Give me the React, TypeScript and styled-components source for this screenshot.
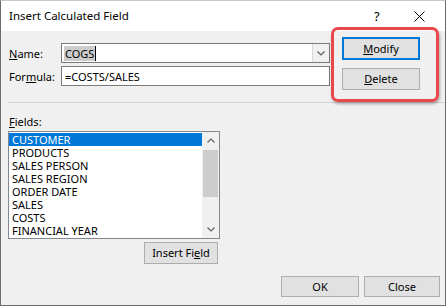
import React from "react";
import styled, {createGlobalStyle} from "styled-components";

const GlobalStyle = createGlobalStyle`
	html, body {
		margin: 0;
		padding: 0;
		background: #ffffff;
	}
	body {
		font-family: "Noto Sans", "Liberation Sans", sans-serif;
		font-size: 11px;
		color: #000;
	}
`;

const fields = [
	"CUSTOMER",
	"PRODUCTS",
	"SALES PERSON",
	"SALES REGION",
	"ORDER DATE",
	"SALES",
	"COSTS",
	"FINANCIAL YEAR",
];

const Chevron = ({up}: {up?: boolean}) => (
	<svg width="8" height="5" viewBox="0 0 8 5">
		<polyline
			points={up ? "0.5,4.5 4,1 7.5,4.5" : "0.5,0.5 4,4 7.5,0.5"}
			fill="none"
			stroke="#606060"
			strokeWidth="1.2"
		/>
	</svg>
);

const App: React.FC = () => {
	return (
		<>
			<GlobalStyle />
			<Window>
				<TitleBar>
					<TitleText>Insert Calculated Field</TitleText>
					<HelpGlyph>?</HelpGlyph>
					<CloseGlyph>
						<svg width="11" height="11" viewBox="0 0 11 11">
							<path d="M0.5 0.5 L10.5 10.5 M10.5 0.5 L0.5 10.5" stroke="#000" strokeWidth="1" />
						</svg>
					</CloseGlyph>
				</TitleBar>
				<Body>
					<TopRow>
						<FormGrid>
							<Label>
								<u>N</u>ame:
							</Label>
							<Combo>
								<ComboText>
									<Selected>COGS</Selected>
									<Caret />
								</ComboText>
								<DropButton>
									<Chevron />
								</DropButton>
							</Combo>
							<Label>
								For<u>m</u>ula:
							</Label>
							<Input>=COSTS/SALES</Input>
						</FormGrid>
						<SideButtons>
							<DialogButton $focused $width={78} $height={23}>
								<u>M</u>odify
							</DialogButton>
							<DialogButton $width={78} $height={22}>
								<u>D</u>elete
							</DialogButton>
						</SideButtons>
					</TopRow>
					<Separator />
					<FieldsLabel>
						<u>F</u>ields:
					</FieldsLabel>
					<ListBox>
						<ListItems>
							{fields.map((f, i) => (
								<ListItem key={f} $selected={i === 0}>
									{f}
								</ListItem>
							))}
						</ListItems>
						<ScrollBar>
							<ScrollArrow>
								<Chevron up />
							</ScrollArrow>
							<ScrollTrack>
								<Thumb />
							</ScrollTrack>
							<ScrollArrow>
								<Chevron />
							</ScrollArrow>
						</ScrollBar>
					</ListBox>
					<InsertRow>
						<DialogButton $width={74} $height={22}>
							Insert Fi<u>e</u>ld
						</DialogButton>
					</InsertRow>
					<BottomRow>
						<DialogButton $width={78} $height={21}>OK</DialogButton>
						<DialogButton $width={76} $height={21}>Close</DialogButton>
					</BottomRow>
				</Body>
				<Highlight />
			</Window>
		</>
	);
};

export default App;

const Window = styled.div`
	position: relative;
	width: 446px;
	height: 306px;
	box-sizing: border-box;
	border: 1px solid #6b6b6b;
	border-top-color: #c8c8c8;
	display: flex;
	flex-direction: column;
	background: #f0f0f0;
	overflow: hidden;
`;

const TitleBar = styled.div`
	height: 30px;
	flex: none;
	background: #ffffff;
	display: flex;
	align-items: center;
	padding-left: 8px;
	font-size: 11.5px;
`;

const TitleText = styled.div`
	flex: 1;
	padding-bottom: 1px;
`;

const HelpGlyph = styled.div`
	font-size: 13px;
	width: 10px;
	margin-right: 30px;
	padding-bottom: 1px;
`;

const CloseGlyph = styled.div`
	display: flex;
	margin-right: 20px;
	padding-top: 1px;
`;

const Body = styled.div`
	flex: 1;
	display: flex;
	flex-direction: column;
	padding-left: 7px;
`;

const TopRow = styled.div`
	display: flex;
	height: 71px;
	flex: none;
`;

const FormGrid = styled.div`
	margin-top: 12px;
	display: grid;
	grid-template-columns: 53px 269px;
	grid-auto-rows: 20px;
	row-gap: 3px;
	align-items: center;
	align-self: flex-start;
`;

const Label = styled.div`
	padding-left: 1px;
`;

const Combo = styled.div`
	height: 20px;
	box-sizing: border-box;
	border: 1px solid #7a7a7a;
	background: #fff;
	display: flex;
`;

const ComboText = styled.div`
	flex: 1;
	display: flex;
	align-items: center;
	padding-left: 2px;
`;

const Selected = styled.span`
	background: #cccccc;
	line-height: 15px;
	padding: 0 1px;
`;

const Caret = styled.span`
	width: 1px;
	height: 15px;
	background: #000;
`;

const DropButton = styled.div`
	width: 16px;
	background: #f0f0f0;
	border-left: 1px solid #d9d9d9;
	display: flex;
	align-items: center;
	justify-content: center;
`;

const Input = styled.div`
	height: 20px;
	box-sizing: border-box;
	border: 1px solid #7a7a7a;
	background: #fff;
	display: flex;
	align-items: center;
	padding-left: 3px;
`;

const SideButtons = styled.div`
	margin-left: 12px;
	margin-top: 6px;
	display: flex;
	flex-direction: column;
	gap: 8px;
`;

const DialogButton = styled.div<{$focused?: boolean; $width: number; $height: number}>`
	width: ${p => p.$width}px;
	height: ${p => p.$height}px;
	box-sizing: border-box;
	border: ${p => (p.$focused ? "2px solid #0078d7" : "1px solid #adadad")};
	background: #e1e1e1;
	display: flex;
	align-items: center;
	justify-content: center;
	padding-bottom: 1px;
`;

const Separator = styled.div`
	height: 1px;
	background: #d5d5d5;
	flex: none;
`;

const FieldsLabel = styled.div`
	margin-top: 11px;
	height: 16px;
	line-height: 16px;
	padding-left: 1px;
`;

const ListBox = styled.div`
	margin-top: 1px;
	width: 212px;
	height: 108px;
	box-sizing: border-box;
	border: 1px solid #828790;
	background: #fff;
	display: flex;
	overflow: hidden;
`;

const ListItems = styled.div`
	flex: 1;
	padding-top: 1px;
	overflow: hidden;
`;

const ListItem = styled.div<{$selected?: boolean}>`
	height: 13px;
	line-height: 13px;
	padding-left: 3px;
	white-space: nowrap;
	background: ${p => (p.$selected ? "#0078d7" : "transparent")};
	color: ${p => (p.$selected ? "#fff" : "#000")};
`;

const ScrollBar = styled.div`
	width: 17px;
	background: #f0f0f0;
	display: flex;
	flex-direction: column;
`;

const ScrollArrow = styled.div`
	height: 17px;
	display: flex;
	align-items: center;
	justify-content: center;
`;

const ScrollTrack = styled.div`
	flex: 1;
	padding: 1px 1px 0;
`;

const Thumb = styled.div`
	height: 47px;
	background: #cdcdcd;
`;

const InsertRow = styled.div`
	width: 212px;
	margin-top: 3px;
	display: flex;
	justify-content: flex-end;
	padding-right: 2px;
	box-sizing: border-box;
`;

const BottomRow = styled.div`
	margin-top: 12px;
	display: flex;
	justify-content: flex-end;
	gap: 5px;
	padding-right: 5px;
`;

const Highlight = styled.div`
	position: absolute;
	left: 330px;
	top: 26px;
	width: 108px;
	height: 75px;
	box-sizing: border-box;
	border: 3px solid #e8474c;
	border-radius: 7px;
	box-shadow: 1px 2px 3px rgba(0, 0, 0, 0.3);
	pointer-events: none;
`;
